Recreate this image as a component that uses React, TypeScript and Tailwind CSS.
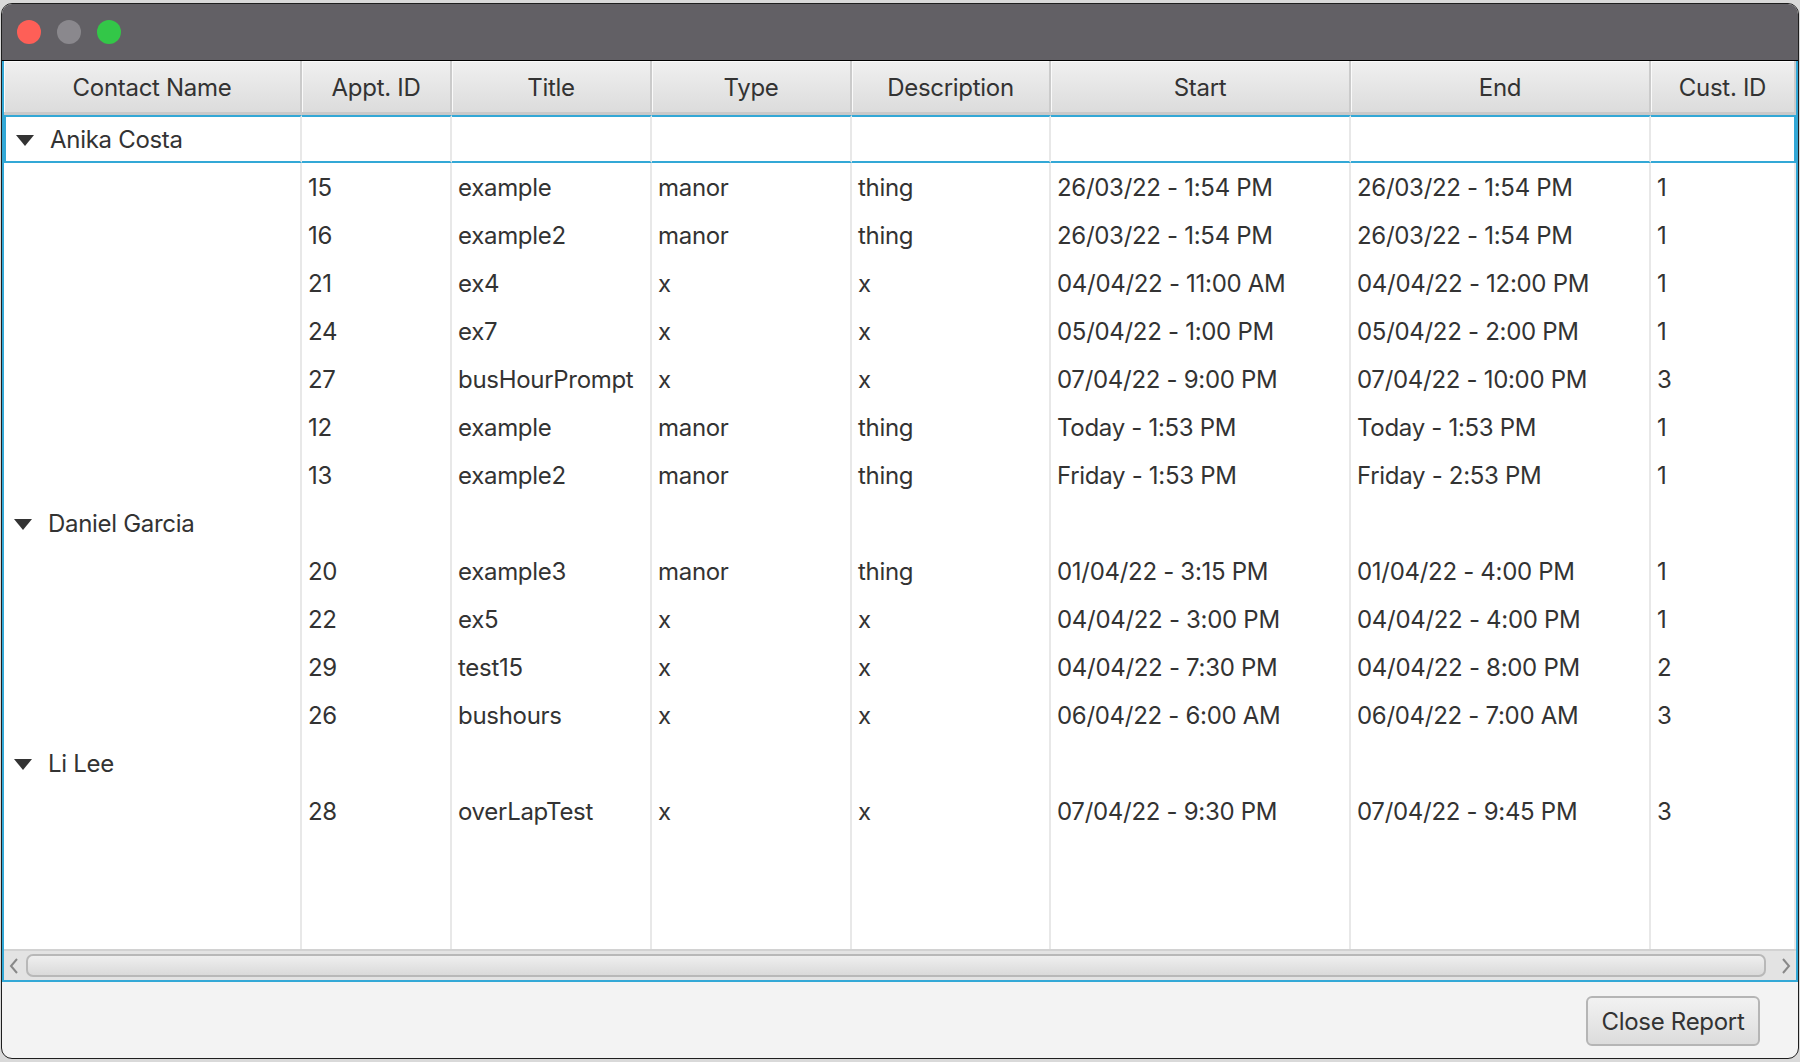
const cols = [
  { label: "Contact Name", w: "w-[298px]" },
  { label: "Appt. ID", w: "w-[150px]" },
  { label: "Title", w: "w-[200px]" },
  { label: "Type", w: "w-[200px]" },
  { label: "Description", w: "w-[199px]" },
  { label: "Start", w: "w-[300px]" },
  { label: "End", w: "w-[300px]" },
  { label: "Cust. ID", w: "flex-1" },
];

type Appt = [string, string, string, string, string, string, string];

const groups: { name: string; rows: Appt[] }[] = [
  {
    name: "Anika Costa",
    rows: [
      ["15", "example", "manor", "thing", "26/03/22 - 1:54 PM", "26/03/22 - 1:54 PM", "1"],
      ["16", "example2", "manor", "thing", "26/03/22 - 1:54 PM", "26/03/22 - 1:54 PM", "1"],
      ["21", "ex4", "x", "x", "04/04/22 - 11:00 AM", "04/04/22 - 12:00 PM", "1"],
      ["24", "ex7", "x", "x", "05/04/22 - 1:00 PM", "05/04/22 - 2:00 PM", "1"],
      ["27", "busHourPrompt", "x", "x", "07/04/22 - 9:00 PM", "07/04/22 - 10:00 PM", "3"],
      ["12", "example", "manor", "thing", "Today - 1:53 PM", "Today - 1:53 PM", "1"],
      ["13", "example2", "manor", "thing", "Friday - 1:53 PM", "Friday - 2:53 PM", "1"],
    ],
  },
  {
    name: "Daniel Garcia",
    rows: [
      ["20", "example3", "manor", "thing", "01/04/22 - 3:15 PM", "01/04/22 - 4:00 PM", "1"],
      ["22", "ex5", "x", "x", "04/04/22 - 3:00 PM", "04/04/22 - 4:00 PM", "1"],
      ["29", "test15", "x", "x", "04/04/22 - 7:30 PM", "04/04/22 - 8:00 PM", "2"],
      ["26", "bushours", "x", "x", "06/04/22 - 6:00 AM", "06/04/22 - 7:00 AM", "3"],
    ],
  },
  {
    name: "Li Lee",
    rows: [["28", "overLapTest", "x", "x", "07/04/22 - 9:30 PM", "07/04/22 - 9:45 PM", "3"]],
  },
];

function GroupRow({ name, focused }: { name: string; focused: boolean }) {
  return (
    <div className="flex h-[48px]">
      {cols.map((c, i) => (
        <div
          key={i}
          className={`${c.w} shrink-0 flex items-center pt-[2px] border-r-2 border-[#e8e8e8] ${
            focused ? "border-y-2 border-y-[#33a8d6]" : ""
          } ${focused && i === 0 ? "border-l-2 border-l-[#33a8d6]" : ""} ${
            focused && i === cols.length - 1 ? "border-r-[#33a8d6]" : ""
          }`}
        >
          {i === 0 && (
            <div className="flex items-center">
              <svg width="18" height="11" viewBox="0 0 18 11" className="ml-[10px] mr-[16px]">
                <path d="M0 0H18L9 11Z" fill="#333" />
              </svg>
              <span>{name}</span>
            </div>
          )}
        </div>
      ))}
    </div>
  );
}

function DataRow({ r }: { r: Appt }) {
  const cells = ["", ...r];
  return (
    <div className="flex h-[48px]">
      {cols.map((c, i) => (
        <div
          key={i}
          className={`${c.w} shrink-0 flex items-center pt-[2px] px-[6px] border-r-2 border-[#e8e8e8] whitespace-nowrap overflow-hidden`}
        >
          {cells[i]}
        </div>
      ))}
    </div>
  );
}

export default function App() {
  return (
    <div className="w-[1800px] h-[1062px] bg-[#d9d9d9] pt-[3px] pl-[1px] font-['Inter','Liberation_Sans',sans-serif] text-[24px] tracking-[-0.3px] text-[#333]">
      <div className="w-[1798px] h-[1056px] rounded-[11px] border border-[#1e1e1e] overflow-hidden flex flex-col bg-[#f3f3f3]">
        {/* title bar */}
        <div className="h-[57px] shrink-0 bg-[#626065] border-b border-black flex items-center gap-[16px] pl-[15px]">
          <span className="w-[24px] h-[24px] rounded-full bg-[#fe5f57]" />
          <span className="w-[24px] h-[24px] rounded-full bg-[#8a888d]" />
          <span className="w-[24px] h-[24px] rounded-full bg-[#33c748]" />
        </div>

        {/* table */}
        <div className="h-[921px] shrink-0 border-2 border-t-0 border-[#33a8d6] bg-white flex flex-col">
          <div className="flex h-[54px] shrink-0 border-b-[3px] border-[#c9c9c9]">
            {cols.map((c, i) => (
              <div
                key={i}
                className={`${c.w} shrink-0 flex items-center justify-center pt-[2px] border-r-2 border-[#cbcbcb] bg-gradient-to-b from-[#f0f0f0] to-[#dcdcdc] shadow-[inset_1px_1px_0_#fafafa] whitespace-nowrap overflow-hidden`}
              >
                {c.label}
              </div>
            ))}
          </div>

          <div className="flex-1 flex flex-col">
            {groups.map((g, gi) => (
              <div key={g.name}>
                <GroupRow name={g.name} focused={gi === 0} />
                {g.rows.map((r, ri) => (
                  <DataRow key={ri} r={r} />
                ))}
              </div>
            ))}
            <div className="flex flex-1">
              {cols.map((c, i) => (
                <div key={i} className={`${c.w} shrink-0 border-r-2 border-[#e8e8e8]`} />
              ))}
            </div>
          </div>

          {/* horizontal scrollbar */}
          <div className="h-[31px] shrink-0 bg-[#e3e3e3] border-t-2 border-[#d2d2d2] flex items-center px-[4px] gap-[6px]">
            <svg width="12" height="18" viewBox="0 0 12 18">
              <path d="M9 2L3 9L9 16" stroke="#888" strokeWidth="2" fill="none" />
            </svg>
            <div className="flex-1 h-[23px] rounded-[7px] border-2 border-[#b8b8b8] bg-gradient-to-b from-[#efefef] to-[#dadada]" />
            <svg width="12" height="18" viewBox="0 0 12 18" className="ml-[8px]">
              <path d="M3 2L9 9L3 16" stroke="#888" strokeWidth="2" fill="none" />
            </svg>
          </div>
        </div>

        {/* footer */}
        <div className="flex-1 flex items-start justify-end pt-[14px] pr-[38px]">
          <button className="w-[174px] h-[50px] rounded-[6px] border-2 border-[#b5b5b5] bg-gradient-to-b from-[#f2f2f2] to-[#dcdcdc] text-[#333] text-[24px] pt-[2px]">
            Close Report
          </button>
        </div>
      </div>
    </div>
  );
}
